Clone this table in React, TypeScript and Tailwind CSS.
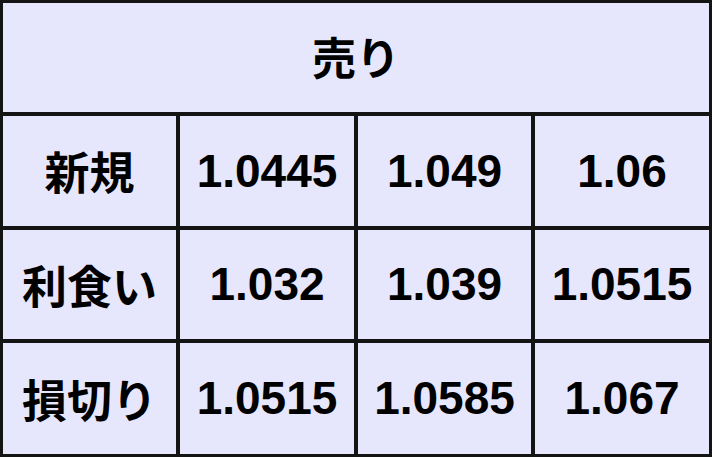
const rows = [
  { label: "新規", values: ["1.0445", "1.049", "1.06"] },
  { label: "利食い", values: ["1.032", "1.039", "1.0515"] },
  { label: "損切り", values: ["1.0515", "1.0585", "1.067"] },
]

const cell =
  "flex items-center justify-center bg-[#e6e6fc] text-black"

const App = () => {
  return (
    <div className="h-[457px] w-[712px] bg-[#141414] p-[3px]">
      <div
        className="grid h-full w-full gap-[4px] grid-cols-[173px_174px_173px_174px] grid-rows-[109px_110px_109px_111px]"
        style={{ fontFamily: '"Liberation Sans", "Noto Sans CJK JP", sans-serif' }}
      >
        <div
          className={`${cell} col-span-4 pb-[4px] text-[44px] font-bold`}
          style={{ fontFamily: '"Noto Sans CJK JP", sans-serif' }}
        >
          売り
        </div>
        {rows.map((row) => (
          <div key={row.label} className="contents">
            <div
              className={`${cell} text-[45px] font-bold`}
              style={{ fontFamily: '"Noto Sans CJK JP", sans-serif' }}
            >
              {row.label}
            </div>
            {row.values.map((v, i) => (
              <div key={i} className={`${cell} text-[46px] font-bold`}>
                {v}
              </div>
            ))}
          </div>
        ))}
      </div>
    </div>
  )
}

export default App
